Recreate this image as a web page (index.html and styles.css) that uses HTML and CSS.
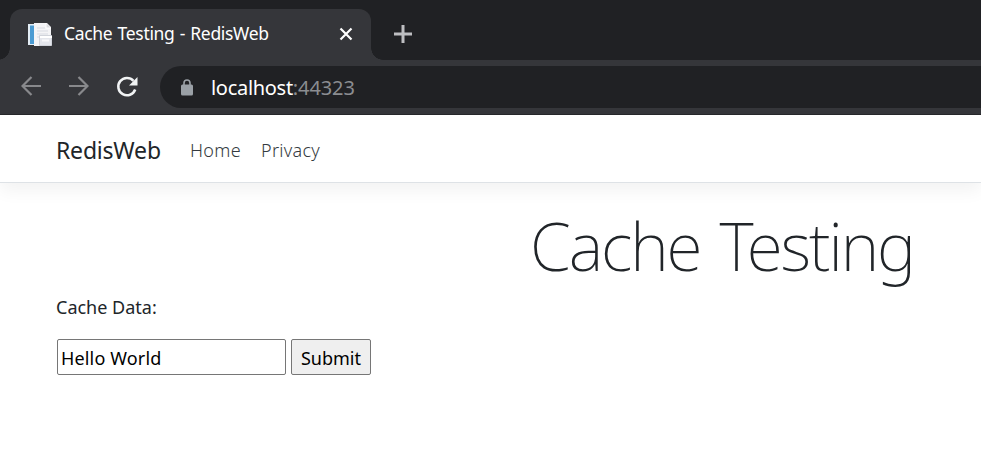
FILE: index.html
```html
<!DOCTYPE html>
<html lang="en">
<head>
<meta charset="utf-8">
<title>Cache Testing - RedisWeb</title>
<link rel="stylesheet" href="styles.css">
</head>
<body>
<div class="tabstrip">
  <div class="tab">
    <svg class="favicon" width="26" height="26" viewBox="0 0 26 26">
      <path d="M1 2h10v21H1z" fill="#e3edf5"/>
      <path d="M3 3.500h4V22H3z" fill="#4b9bd2"/>
      <path d="M7 1h13l4 4v19H7z" fill="#f4f4f6"/>
      <path d="M19 1v5h5" fill="#dcdce0" stroke="#fff"/>
      <path d="M10 6h8M10 9h11M10 12h11M10 15h5" stroke="#d8dbe2"/>
      <path d="M12.500 13.500h12v10h-12z" fill="#e4e6ec" stroke="#d1d4db"/>
      <path d="M13 15h12" stroke="#fff" stroke-width="2"/>
      <path d="M15 18.500h7" stroke="#f8f8fa" stroke-width="2"/>
    </svg>
    <span class="tab-title">Cache Testing - RedisWeb</span>
    <svg class="close" width="14" height="14" viewBox="0 0 14 14"><path d="M1.500 1.500l11 11M12.500 1.500l-11 11" stroke="#fff" stroke-width="2.200"/></svg>
  </div>
  <svg class="plus" width="18" height="18" viewBox="0 0 18 18"><path d="M9 0v18M0 9h18" stroke="#bdbec1" stroke-width="3"/></svg>
</div>
<div class="toolbar">
  <svg class="nav-icon" width="20" height="20" viewBox="0 0 20 20"><path d="M20 10H1.500M10.500 1L1.500 10l9 9" fill="none" stroke="#88898c" stroke-width="2.200"/></svg>
  <svg class="nav-icon" width="20" height="20" viewBox="0 0 20 20"><path d="M0 10h18.500M9.500 1l9 9-9 9" fill="none" stroke="#88898c" stroke-width="2.200"/></svg>
  <svg class="nav-icon" width="22" height="22" viewBox="0 0 22 22"><path d="M17.500 4.800A8.700 8.700 0 1 0 19.200 13.500" fill="none" stroke="#f1f3f4" stroke-width="2.500"/><path d="M21.500 1v8.500h-8.500z" fill="#f1f3f4"/></svg>
  <div class="address">
    <svg class="lock" width="12" height="17" viewBox="0 0 12 17"><path d="M3 7V4a3 3 0 0 1 6 0v3" fill="none" stroke="#9aa0a6" stroke-width="1.600"/><rect y="5.500" width="12" height="11" rx="1.500" fill="#9aa0a6"/></svg>
    <span class="host">localhost</span><span class="port">:44323</span>
  </div>
</div>
<header class="navbar">
  <a class="brand">RedisWeb</a>
  <a class="link home">Home</a>
  <a class="link privacy">Privacy</a>
</header>
<main>
  <h1>Cache Testing</h1>
  <p class="label">Cache Data:</p>
  <form>
    <input type="text" value="Hello World">
    <button type="button">Submit</button>
  </form>
</main>
</body>
</html>
```
FILE: styles.css
```css
* { box-sizing: border-box; }
body {
  margin: 0;
  height: 470px;
  overflow: hidden;
  background: #fff;
  color: #212529;
  font-family: "Noto Sans", "Open Sans", sans-serif;
}
svg { display: block; flex: none; }
.tabstrip {
  display: flex;
  height: 60px;
  padding: 9px 0 0 10px;
  background: #202124;
}
.tab {
  position: relative;
  display: flex;
  align-items: center;
  width: 361px;
  height: 51px;
  padding: 0 18px 0 17px;
  border-radius: 12px 12px 0 0;
  background: #35363a;
}
.tab::before, .tab::after {
  content: "";
  position: absolute;
  bottom: 0;
  width: 12px;
  height: 12px;
}
.tab::before { left: -12px; background: radial-gradient(circle at 0 0, transparent 11.500px, #35363a 12px); }
.tab::after { right: -12px; background: radial-gradient(circle at 100% 0, transparent 11.500px, #35363a 12px); }
.tab-title {
  margin-left: 11px;
  padding-bottom: 3px;
  color: #fff;
  font-size: 17.500px;
  white-space: nowrap;
  letter-spacing: -0.320px;
  word-spacing: 1px;
}
.close { margin: 0 0 1px auto; }
.plus { margin: 16px 0 0 23px; }
.toolbar {
  display: flex;
  align-items: center;
  height: 55px;
  padding-left: 21px;
  background: #35363a;
  border-bottom: 1px solid #27282b;
}
.nav-icon { margin: 0 28px 2px 0; }
.nav-icon:nth-child(3) { margin: 0 22px 1px -1px; }
.address {
  display: flex;
  align-items: center;
  flex: 1;
  height: 42px;
  padding-left: 21px;
  border-radius: 21px 0 0 21px;
  background: #202124;
  font-size: 20px;
}
.host { margin-left: 18px; color: #fff; letter-spacing: -0.300px; }
.port { color: #8b8d91; letter-spacing: -0.100px; }
.navbar {
  display: flex;
  align-items: center;
  height: 68px;
  padding: 3px 56px 0;
  border-bottom: 1px solid #dee2e6;
  box-shadow: 0 8px 16px rgba(0, 0, 0, .05);
}
.brand { width: 134px; font-size: 23px; letter-spacing: -0.200px; }
.link { color: #343a40; font-size: 18px; font-weight: 300; letter-spacing: .3px; }
.home { width: 71px; }
main { padding: 0 0 0 56px; }
h1 {
  height: 90px;
  margin: 17px 0 0;
  padding-left: 474px;
  font-size: 66px;
  line-height: 90px;
  font-weight: 200;
  letter-spacing: -2.100px;
  word-spacing: 4px;
  white-space: nowrap;
}
.label { margin: 0; padding-top: 3px; font-size: 18px; line-height: 28px; }
form { display: flex; gap: 5px; margin: 18px 0 0 1px; }
input, button {
  height: 36px;
  margin: 0;
  border: 1px solid #767676;
  border-radius: 2px;
  color: #000;
  font: 18px "Noto Sans", "Open Sans", sans-serif;
}
input { width: 229px; padding: 1px 3px 0; background: #fff; letter-spacing: .15px; }
button { width: 80px; padding: 1px 0 0; background: #efefef; }
```
